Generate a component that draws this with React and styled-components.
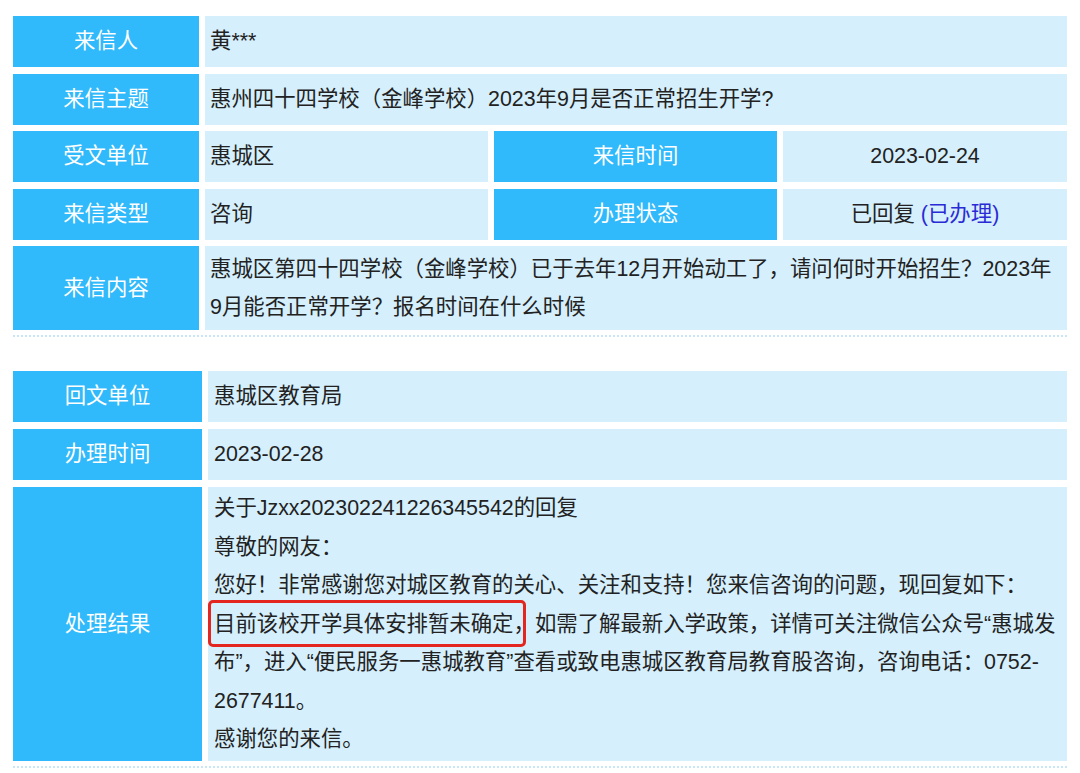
import React from 'react';
import styled, { createGlobalStyle } from 'styled-components';

const GlobalStyle = createGlobalStyle`
  html, body {
    margin: 0;
    padding: 0;
    background: #ffffff;
  }

  body {
    font-family: "Liberation Sans", "Noto Sans CJK SC", sans-serif;
  }
`;

const Page = styled.div`
  width: 1054px;
  padding: 16px 13px 0;
  font-size: 21.4px;
  line-height: 38.5px;
  color: #222222;
`;

const InfoTable = styled.div`
  display: grid;
  grid-template-columns: 186px 283px 283px 1fr;
  grid-auto-rows: minmax(51px, auto);
  gap: 6.5px 6px;
  padding-bottom: 5px;
  border-bottom: 2px dotted #c8e6f6;
`;

const ReplyTable = styled(InfoTable)`
  grid-template-columns: 189px 1fr;
  gap: 7px 6px;
  margin-top: 34px;
`;

const Label = styled.div`
  background: #30b9fb;
  color: #ffffff;
  display: flex;
  align-items: center;
  justify-content: center;
`;

const Value = styled.div`
  background: #d5effc;
  display: flex;
  align-items: center;
  justify-content: ${props => props.$center ? 'center' : 'flex-start'};
  grid-column: ${props => props.$span ? `span ${props.$span}` : 'auto'};
  padding: ${props => props.$tight ? '2px' : '3.5px'} ${props => props.$pad || 5}px;
  white-space: nowrap;
`;

const Text = styled.div`
  line-height: 38.5px;
`;

const Status = styled.span`
  color: #2b2bd6;
`;

const Mark = styled.span`
  position: relative;

  &::after {
    content: '';
    position: absolute;
    left: -6px;
    right: 9px;
    top: -12px;
    bottom: -11px;
    border: 3px solid #e3261f;
    border-radius: 5px;
    pointer-events: none;
  }
`;

const App = () => {
  return (
    <Page>
      <GlobalStyle />

      <InfoTable>
        <Label>来信人</Label>
        <Value $span={3}>黄***</Value>

        <Label>来信主题</Label>
        <Value $span={3}>惠州四十四学校（金峰学校）2023年9月是否正常招生开学?</Value>

        <Label>受文单位</Label>
        <Value>惠城区</Value>
        <Label>来信时间</Label>
        <Value $center>2023-02-24</Value>

        <Label>来信类型</Label>
        <Value>咨询</Value>
        <Label>办理状态</Label>
        <Value $center>
          已回复&nbsp;<Status>(已办理)</Status>
        </Value>

        <Label>来信内容</Label>
        <Value $span={3}>
          <Text>
            惠城区第四十四学校（金峰学校）已于去年12月开始动工了，请问何时开始招生？2023年
            <br />
            9月能否正常开学？报名时间在什么时候
          </Text>
        </Value>
      </InfoTable>

      <ReplyTable>
        <Label>回文单位</Label>
        <Value $pad={6}>惠城区教育局</Value>

        <Label>办理时间</Label>
        <Value $pad={6}>2023-02-28</Value>

        <Label>处理结果</Label>
        <Value $pad={6} $tight>
          <Text>
            关于Jzxx202302241226345542的回复
            <br />
            尊敬的网友：
            <br />
            您好！非常感谢您对城区教育的关心、关注和支持！您来信咨询的问题，现回复如下：
            <br />
            <Mark>目前该校开学具体安排暂未确定，</Mark>如需了解最新入学政策，详情可关注微信公众号“惠城发
            <br />
            布”，进入“便民服务一惠城教育”查看或致电惠城区教育局教育股咨询，咨询电话：0752-
            <br />
            2677411。
            <br />
            感谢您的来信。
          </Text>
        </Value>
      </ReplyTable>
    </Page>
  );
};

export default App;
